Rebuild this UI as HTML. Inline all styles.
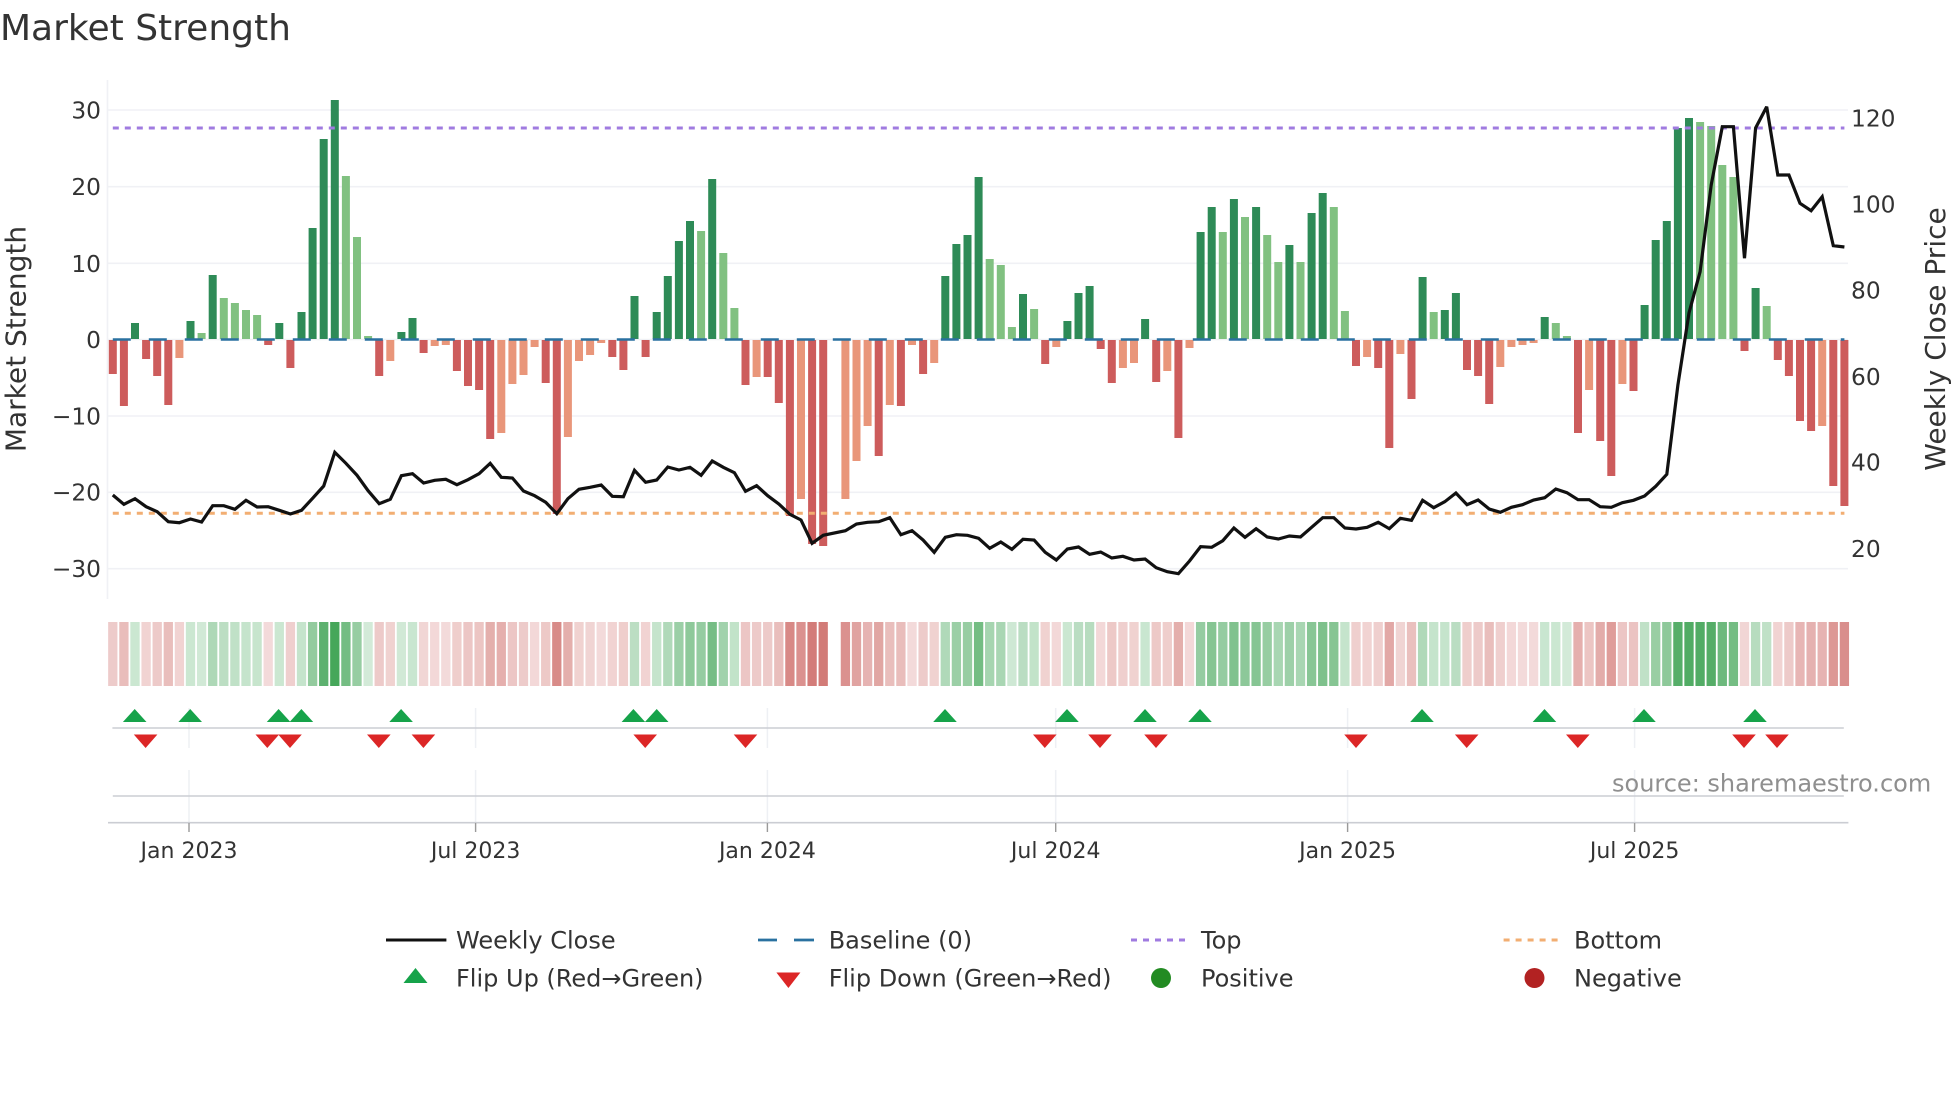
<!DOCTYPE html>
<html lang="en">
<head>
<meta charset="utf-8">
<title>Market Strength</title>
<style>
html,body{margin:0;padding:0;background:#fff}
svg{display:block}
text{font-family:"DejaVu Sans","Liberation Sans",sans-serif;fill:#333}
</style>
</head>
<body>
<svg width="1960" height="1102" viewBox="0 0 1960 1102" xmlns="http://www.w3.org/2000/svg">
<rect width="1960" height="1102" fill="#fff"/>
<text x="0" y="40" font-size="36">Market Strength</text>

<!-- grid -->
<g stroke="#f0f1f5" stroke-width="1.6" fill="none">
<path d="M107.5 80V599"/>
<path d="M108 110H1848M108 186.7H1848M108 263.3H1848M108 339.5H1848M108 416H1848M108 492.3H1848M108 568.7H1848"/>
</g>

<!-- bars -->
<g fill="none" stroke-width="8">
<path stroke="#2e8b57" d="M135 339v-16M190.5 339v-18M212.7 339v-64M279.3 339v-16M301.5 339v-27M312.6 339v-111M323.7 339v-200M334.8 339v-239M401.4 339v-7M412.5 339v-21M634.5 339v-43M656.7 339v-27M667.8 339v-63M678.9 339v-98M690 339v-118M712.2 339v-160M945.3 339v-63M956.4 339v-95M967.5 339v-104M978.6 339v-162M1023 339v-45M1067.4 339v-18M1078.5 339v-46M1089.6 339v-53M1145.1 339v-20M1200.6 339v-107M1211.7 339v-132M1233.9 339v-140M1256.1 339v-132M1289.4 339v-94M1311.6 339v-126M1322.7 339v-146M1422.6 339v-62M1444.8 339v-29M1455.9 339v-46M1544.7 339v-22M1644.6 339v-34M1655.7 339v-99M1666.8 339v-118M1677.9 339v-211M1689 339v-221M1755.6 339v-51"/>
<path stroke="#81c181" d="M201.6 339v-6M223.8 339v-41M234.9 339v-36M246 339v-29M257.1 339v-24M345.9 339v-163M357 339v-102M368.1 339v-3M701.1 339v-108M723.3 339v-86M734.4 339v-31M989.7 339v-80M1000.8 339v-74M1011.9 339v-12M1034.1 339v-30M1222.8 339v-107M1245 339v-122M1267.2 339v-104M1278.3 339v-77M1300.5 339v-77M1333.8 339v-132M1344.9 339v-28M1433.7 339v-27M1555.8 339v-16M1566.9 339v-3M1700.1 339v-217M1711.2 339v-213M1722.3 339v-174M1733.4 339v-162M1766.7 339v-33"/>
<path stroke="#cd5c5c" d="M112.8 340v34M123.9 340v66M146.1 340v19M157.2 340v36M168.3 340v65M268.2 340v5M290.4 340v28M379.2 340v36M423.6 340v13M456.9 340v31M468 340v46M479.1 340v50M490.2 340v99M545.7 340v43M556.8 340v174M612.3 340v17M623.4 340v30M645.6 340v17M745.5 340v45M767.7 340v37M778.8 340v63M789.9 340v176M812.1 340v204M823.2 340v206M878.7 340v116M900.9 340v66M923.1 340v34M1045.2 340v24M1100.7 340v9M1111.8 340v43M1156.2 340v42M1178.4 340v98M1356 340v26M1378.2 340v28M1389.3 340v108M1411.5 340v59M1467 340v30M1478.1 340v36M1489.2 340v64M1578 340v93M1600.2 340v101M1611.3 340v136M1633.5 340v51M1744.5 340v11M1777.8 340v20M1788.9 340v36M1800 340v81M1811.1 340v91M1833.3 340v146M1844.4 340v166"/>
<path stroke="#e9967a" d="M179.4 340v18M390.3 340v21M434.7 340v6M445.8 340v5M501.3 340v93M512.4 340v44M523.5 340v35M534.6 340v7M567.9 340v97M579 340v21M590.1 340v15M601.2 340v3M756.6 340v37M801 340v159M845.4 340v159M856.5 340v121M867.6 340v86M889.8 340v65M912 340v5M934.2 340v23M1056.3 340v7M1122.9 340v28M1134 340v23M1167.3 340v31M1189.5 340v8M1367.1 340v17M1400.4 340v14M1500.3 340v27M1511.4 340v7M1522.5 340v5M1533.6 340v3M1589.1 340v50M1622.4 340v44M1822.2 340v86"/>
</g>

<!-- reference lines -->
<g fill="none" stroke-width="3">
<path d="M112.8 339.5H1844.4" stroke="#2a71a0" stroke-width="2.6" stroke-dasharray="18 18"/>
<path d="M112.8 128H1844.4" stroke="#a07be0" stroke-dasharray="6 6"/>
<path d="M112.8 513.3H1844.4" stroke="#f2ae72" stroke-dasharray="6 6"/>
</g>

<!-- weekly close -->
<polyline fill="none" stroke="#111" stroke-width="3.2" stroke-linejoin="miter" stroke-miterlimit="3" points="112.8,495 123.9,504.3 135,498.7 146.1,506.7 157.2,511.7 168.3,521.7 179.4,522.7 190.5,519 201.6,522 212.7,505.7 223.8,505.7 234.9,509.3 246,500.3 257.1,507 268.2,506.7 279.3,510.3 290.4,514 301.5,510.3 312.6,498.3 323.7,486 334.8,452.3 345.9,463.3 357,475.3 368.1,490.7 379.2,503.7 390.3,499.3 401.4,475.7 412.5,473.7 423.6,483 434.7,480.3 445.8,479.3 456.9,484.7 468,479.7 479.1,473.7 490.2,463.3 501.3,477.3 512.4,478 523.5,491 534.6,495.7 545.7,502.3 556.8,513.7 567.9,498.7 579,489.3 590.1,487.3 601.2,485 612.3,496.3 623.4,496.7 634.5,470.3 645.6,482.3 656.7,480 667.8,467 678.9,470 690,467.3 701.1,475.3 712.2,461 723.3,467.3 734.4,472.7 745.5,491.3 756.6,485.7 767.7,495.7 778.8,504 789.9,514.3 801,520 812.1,543.3 823.2,535.3 845.4,530.7 856.5,524 867.6,522.3 878.7,521.7 889.8,517.7 900.9,534.7 912,530.7 923.1,540 934.2,552.3 945.3,537.3 956.4,534.7 967.5,535.3 978.6,538.3 989.7,548.3 1000.8,542 1011.9,549.3 1023,539.3 1034.1,540 1045.2,552.3 1056.3,560 1067.4,549 1078.5,547 1089.6,554.3 1100.7,552 1111.8,558 1122.9,556.3 1134,560 1145.1,559 1156.2,567.7 1167.3,571.7 1178.4,573.7 1189.5,561 1200.6,546.7 1211.7,547.3 1222.8,540.7 1233.9,528 1245,537.3 1256.1,528.7 1267.2,537 1278.3,539 1289.4,536 1300.5,537 1311.6,527.3 1322.7,517.7 1333.8,517.7 1344.9,528 1356,529 1367.1,527.3 1378.2,522.3 1389.3,528.7 1400.4,518.3 1411.5,520.3 1422.6,500.3 1433.7,507.7 1444.8,501.7 1455.9,493 1467,504.7 1478.1,500 1489.2,509 1500.3,512.3 1511.4,507.3 1522.5,504.7 1533.6,500 1544.7,497.7 1555.8,489 1566.9,492.7 1578,499.7 1589.1,499.7 1600.2,506.7 1611.3,507.3 1622.4,502.7 1633.5,500.3 1644.6,496 1655.7,486.3 1666.8,474.3 1677.9,385 1689,313 1700.1,271.7 1711.2,185 1722.3,126.7 1733.4,126.7 1744.5,258.3 1755.6,128 1766.7,106.7 1777.8,175 1788.9,175 1800,203.3 1811.1,210.7 1822.2,196.7 1833.3,245.7 1844.4,247"/>

<!-- strip: green cells -->
<g stroke="#24963c" stroke-width="9.3" fill="none" opacity=".95">
<path d="M135 622v64" opacity=".25"/><path d="M190.5 622v64" opacity=".25"/><path d="M212.7 622v64" opacity=".39"/><path d="M279.3 622v64" opacity=".25"/><path d="M301.5 622v64" opacity=".28"/><path d="M312.6 622v64" opacity=".52"/><path d="M323.7 622v64" opacity=".78"/><path d="M334.8 622v64" opacity=".89"/><path d="M401.4 622v64" opacity=".22"/><path d="M412.5 622v64" opacity=".26"/><path d="M634.5 622v64" opacity=".32"/><path d="M656.7 622v64" opacity=".28"/><path d="M667.8 622v64" opacity=".38"/><path d="M678.9 622v64" opacity=".48"/><path d="M690 622v64" opacity=".54"/><path d="M712.2 622v64" opacity=".66"/><path d="M945.3 622v64" opacity=".38"/><path d="M956.4 622v64" opacity=".48"/><path d="M967.5 622v64" opacity=".5"/><path d="M978.6 622v64" opacity=".67"/><path d="M1023 622v64" opacity=".33"/><path d="M1067.4 622v64" opacity=".25"/><path d="M1078.5 622v64" opacity=".33"/><path d="M1089.6 622v64" opacity=".35"/><path d="M1145.1 622v64" opacity=".26"/><path d="M1200.6 622v64" opacity=".51"/><path d="M1211.7 622v64" opacity=".58"/><path d="M1233.9 622v64" opacity=".61"/><path d="M1256.1 622v64" opacity=".58"/><path d="M1289.4 622v64" opacity=".47"/><path d="M1311.6 622v64" opacity=".57"/><path d="M1322.7 622v64" opacity=".62"/><path d="M1422.6 622v64" opacity=".38"/><path d="M1444.8 622v64" opacity=".28"/><path d="M1455.9 622v64" opacity=".33"/><path d="M1544.7 622v64" opacity=".26"/><path d="M1644.6 622v64" opacity=".3"/><path d="M1655.7 622v64" opacity=".49"/><path d="M1666.8 622v64" opacity=".54"/><path d="M1677.9 622v64" opacity=".81"/><path d="M1689 622v64" opacity=".84"/><path d="M1755.6 622v64" opacity=".35"/>
<path d="M201.6 622v64" opacity=".22"/><path d="M223.8 622v64" opacity=".32"/><path d="M234.9 622v64" opacity=".3"/><path d="M246 622v64" opacity=".28"/><path d="M257.1 622v64" opacity=".27"/><path d="M345.9 622v64" opacity=".67"/><path d="M357 622v64" opacity=".5"/><path d="M368.1 622v64" opacity=".21"/><path d="M701.1 622v64" opacity=".51"/><path d="M723.3 622v64" opacity=".45"/><path d="M734.4 622v64" opacity=".29"/><path d="M989.7 622v64" opacity=".43"/><path d="M1000.8 622v64" opacity=".41"/><path d="M1011.9 622v64" opacity=".23"/><path d="M1034.1 622v64" opacity=".29"/><path d="M1222.8 622v64" opacity=".51"/><path d="M1245 622v64" opacity=".55"/><path d="M1267.2 622v64" opacity=".5"/><path d="M1278.3 622v64" opacity=".42"/><path d="M1300.5 622v64" opacity=".42"/><path d="M1333.8 622v64" opacity=".58"/><path d="M1344.9 622v64" opacity=".28"/><path d="M1433.7 622v64" opacity=".28"/><path d="M1555.8 622v64" opacity=".25"/><path d="M1566.9 622v64" opacity=".21"/><path d="M1700.1 622v64" opacity=".83"/><path d="M1711.2 622v64" opacity=".82"/><path d="M1722.3 622v64" opacity=".7"/><path d="M1733.4 622v64" opacity=".67"/><path d="M1766.7 622v64" opacity=".3"/>
</g>
<!-- strip: red cells -->
<g stroke="#be3c37" stroke-width="9.3" fill="none" opacity=".9">
<path d="M112.8 622v64" opacity=".29"/><path d="M123.9 622v64" opacity=".38"/><path d="M146.1 622v64" opacity=".25"/><path d="M157.2 622v64" opacity=".3"/><path d="M168.3 622v64" opacity=".37"/><path d="M268.2 622v64" opacity=".21"/><path d="M290.4 622v64" opacity=".27"/><path d="M379.2 622v64" opacity=".3"/><path d="M423.6 622v64" opacity=".23"/><path d="M456.9 622v64" opacity=".28"/><path d="M468 622v64" opacity=".32"/><path d="M479.1 622v64" opacity=".33"/><path d="M490.2 622v64" opacity=".46"/><path d="M545.7 622v64" opacity=".31"/><path d="M556.8 622v64" opacity=".66"/><path d="M612.3 622v64" opacity=".25"/><path d="M623.4 622v64" opacity=".28"/><path d="M645.6 622v64" opacity=".25"/><path d="M745.5 622v64" opacity=".32"/><path d="M767.7 622v64" opacity=".3"/><path d="M778.8 622v64" opacity=".37"/><path d="M789.9 622v64" opacity=".67"/><path d="M812.1 622v64" opacity=".74"/><path d="M823.2 622v64" opacity=".75"/><path d="M878.7 622v64" opacity=".51"/><path d="M900.9 622v64" opacity=".38"/><path d="M923.1 622v64" opacity=".29"/><path d="M1045.2 622v64" opacity=".26"/><path d="M1100.7 622v64" opacity=".22"/><path d="M1111.8 622v64" opacity=".31"/><path d="M1156.2 622v64" opacity=".31"/><path d="M1178.4 622v64" opacity=".46"/><path d="M1356 622v64" opacity=".27"/><path d="M1378.2 622v64" opacity=".27"/><path d="M1389.3 622v64" opacity=".49"/><path d="M1411.5 622v64" opacity=".36"/><path d="M1467 622v64" opacity=".28"/><path d="M1478.1 622v64" opacity=".3"/><path d="M1489.2 622v64" opacity=".37"/><path d="M1578 622v64" opacity=".45"/><path d="M1600.2 622v64" opacity=".47"/><path d="M1611.3 622v64" opacity=".56"/><path d="M1633.5 622v64" opacity=".34"/><path d="M1744.5 622v64" opacity=".23"/><path d="M1777.8 622v64" opacity=".25"/><path d="M1788.9 622v64" opacity=".3"/><path d="M1800 622v64" opacity=".42"/><path d="M1811.1 622v64" opacity=".44"/><path d="M1833.3 622v64" opacity=".59"/><path d="M1844.4 622v64" opacity=".64"/>
<path d="M179.4 622v64" opacity=".25"/><path d="M390.3 622v64" opacity=".26"/><path d="M434.7 622v64" opacity=".22"/><path d="M445.8 622v64" opacity=".21"/><path d="M501.3 622v64" opacity=".45"/><path d="M512.4 622v64" opacity=".32"/><path d="M523.5 622v64" opacity=".29"/><path d="M534.6 622v64" opacity=".22"/><path d="M567.9 622v64" opacity=".46"/><path d="M579 622v64" opacity=".26"/><path d="M590.1 622v64" opacity=".24"/><path d="M601.2 622v64" opacity=".21"/><path d="M756.6 622v64" opacity=".3"/><path d="M801 622v64" opacity=".62"/><path d="M845.4 622v64" opacity=".62"/><path d="M856.5 622v64" opacity=".52"/><path d="M867.6 622v64" opacity=".43"/><path d="M889.8 622v64" opacity=".37"/><path d="M912 622v64" opacity=".21"/><path d="M934.2 622v64" opacity=".26"/><path d="M1056.3 622v64" opacity=".22"/><path d="M1122.9 622v64" opacity=".27"/><path d="M1134 622v64" opacity=".26"/><path d="M1167.3 622v64" opacity=".28"/><path d="M1189.5 622v64" opacity=".22"/><path d="M1367.1 622v64" opacity=".25"/><path d="M1400.4 622v64" opacity=".24"/><path d="M1500.3 622v64" opacity=".27"/><path d="M1511.4 622v64" opacity=".22"/><path d="M1522.5 622v64" opacity=".21"/><path d="M1533.6 622v64" opacity=".21"/><path d="M1589.1 622v64" opacity=".33"/><path d="M1622.4 622v64" opacity=".32"/><path d="M1822.2 622v64" opacity=".43"/>
</g>

<!-- flip panel grid -->
<g stroke="#eef0f4" stroke-width="1.5" fill="none">
<path d="M189 708V748M189 770V822M475.6 708V748M475.6 770V822M767.4 708V748M767.4 770V822M1055.7 708V748M1055.7 770V822M1347.6 708V748M1347.6 770V822M1634.6 708V748M1634.6 770V822"/>
</g>
<g stroke="#cbcdd3" stroke-width="1.6" fill="none">
<path d="M112.4 728H1843.8M112.8 796H1843.8M108 822.7H1848.4"/>
</g>
<g stroke="#9a9a9a" stroke-width="1.4" fill="none">
<path d="M189 823V832M475.6 823V832M767.4 823V832M1055.7 823V832M1347.6 823V832M1634.6 823V832"/>
</g>

<!-- flip markers -->
<g fill="#16a34a">
<path d="M134.7 709l11.800 13h-23.600zM190.2 709l11.800 13h-23.600zM278.6 709l11.800 13h-23.600zM301.4 709l11.800 13h-23.600zM401.1 709l11.800 13h-23.600zM633.4 709l11.800 13h-23.600zM656.7 709l11.800 13h-23.600zM945 709l11.800 13h-23.600zM1067 709l11.800 13h-23.600zM1145 709l11.800 13h-23.600zM1200 709l11.800 13h-23.600zM1422 709l11.800 13h-23.600zM1544.5 709l11.800 13h-23.600zM1644 709l11.800 13h-23.600zM1755 709l11.800 13h-23.600z"/>
</g>
<g fill="#dc2626">
<path d="M145.6 748l-11.800-13.500h23.600zM267.3 748l-11.800-13.500h23.600zM290 748l-11.800-13.500h23.600zM378.8 748l-11.800-13.500h23.600zM423.4 748l-11.800-13.500h23.600zM645.2 748l-11.800-13.500h23.600zM745.5 748l-11.800-13.500h23.600zM1044.8 748l-11.800-13.500h23.600zM1100 748l-11.800-13.500h23.600zM1156 748l-11.800-13.500h23.600zM1356 748l-11.800-13.500h23.600zM1466.7 748l-11.800-13.500h23.600zM1577.8 748l-11.800-13.500h23.600zM1744 748l-11.800-13.500h23.600zM1777 748l-11.800-13.500h23.600z"/>
</g>

<!-- left ticks -->
<g font-size="23.3" text-anchor="end">
<text x="101" y="118.4">30</text>
<text x="101" y="195">20</text>
<text x="101" y="272">10</text>
<text x="101" y="348">0</text>
<text x="101" y="424.4">−10</text>
<text x="101" y="500.7">−20</text>
<text x="101" y="577">−30</text>
</g>
<!-- right ticks -->
<g font-size="23.3">
<text x="1851" y="126.7">120</text>
<text x="1851" y="212.4">100</text>
<text x="1851" y="298.4">80</text>
<text x="1851" y="385">60</text>
<text x="1851" y="470.7">40</text>
<text x="1851" y="557">20</text>
</g>
<!-- x ticks -->
<g font-size="22" text-anchor="middle">
<text x="189" y="858">Jan 2023</text>
<text x="475.6" y="858">Jul 2023</text>
<text x="767.4" y="858">Jan 2024</text>
<text x="1055.7" y="858">Jul 2024</text>
<text x="1347.6" y="858">Jan 2025</text>
<text x="1634.6" y="858">Jul 2025</text>
</g>
<!-- axis titles -->
<text font-size="28" text-anchor="middle" transform="translate(25.500 339) rotate(-90)">Market Strength</text>
<text font-size="28" text-anchor="middle" transform="translate(1945 339) rotate(-90)">Weekly Close Price</text>

<text x="1612" y="791.7" font-size="24" style="fill:#8f8f8f">source: sharemaestro.com</text>

<!-- legend -->
<g fill="none" stroke-width="2.8">
<path d="M386 940H446.4" stroke="#111" stroke-width="3"/>
<path d="M758 940H777M794 940H814" stroke="#2a71a0"/>
<path d="M1131 940H1187" stroke="#a07be0" stroke-width="3" stroke-dasharray="6 6"/>
<path d="M1503.6 940H1559" stroke="#f2ae72" stroke-width="3" stroke-dasharray="6 6"/>
</g>
<path d="M415.500 968l12 15h-24z" fill="#16a34a"/>
<path d="M788.4 988l-12-15.500h24z" fill="#dc2626"/>
<circle cx="1161" cy="978" r="10" fill="#228b22"/>
<circle cx="1534.500" cy="978" r="10" fill="#b22222"/>
<g font-size="24">
<text x="456" y="948.3">Weekly Close</text>
<text x="828.700" y="948.3">Baseline (0)</text>
<text x="1201" y="948.3">Top</text>
<text x="1574" y="948.3">Bottom</text>
<text x="456" y="986.3">Flip Up (Red→Green)</text>
<text x="828.700" y="986.3">Flip Down (Green→Red)</text>
<text x="1201" y="986.3">Positive</text>
<text x="1574" y="986.3">Negative</text>
</g>
</svg>
</body>
</html>
